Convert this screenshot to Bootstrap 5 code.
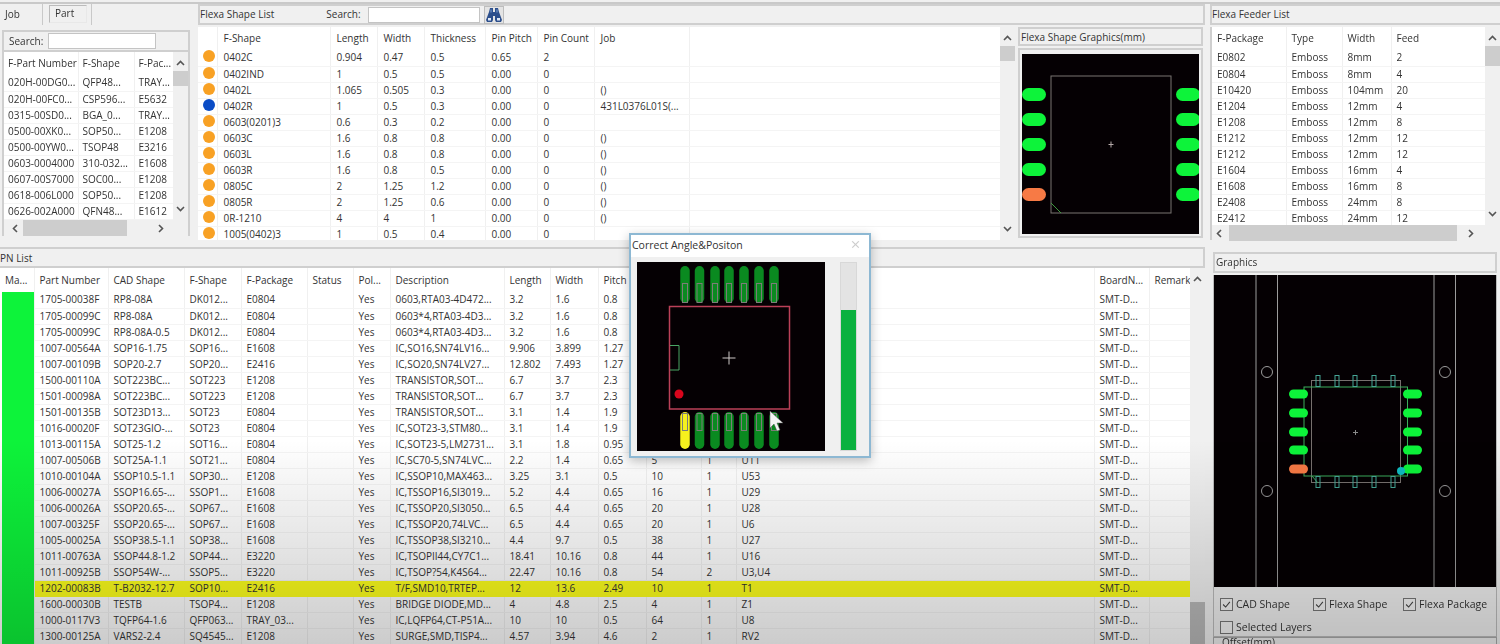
<!DOCTYPE html>
<html lang="en">
<head>
  <meta charset="UTF-8" />
  <meta name="viewport" content="width=device-width, initial-scale=1.0" />
  <title>Flexa Part Library</title>
  <link href="https://cdn.jsdelivr.net/npm/bootstrap@5.3.0/dist/css/bootstrap.min.css" rel="stylesheet" />
  <style>
    html, body { height: 100%; overflow: hidden; }
    body {
      background-color: #f0f0f0;
      color: #333;
      font: 10px/16px "Open Sans", "Liberation Sans", sans-serif;
    }
    .app {
      display: grid;
      grid-template-columns: 197px 1013px 290px;
      grid-template-rows: 245px 397px;
      width: 1500px;
      height: 644px;
      padding-top: 2px;
      border-top: 0;
      position: relative;
      filter: blur(.35px);
    }
    .app::before {
      content: "";
      position: absolute;
      left: 0; right: 0; top: 2px;
      border-top: 2px solid #c9c9c9;
    }
    .app::after {
      content: "";
      position: absolute;
      left: 0; right: 0; top: 440px; bottom: 0;
      background: linear-gradient(rgba(0,0,0,0), rgba(0,0,0,.2));
      pointer-events: none;
    }
    .title-bar {
      height: 21px;
      border: 2px solid #cfcfcf;
      background: #f0f0f0;
      padding-left: 0;
      line-height: 17px;
      flex: none;
    }
    .box { border: 2px solid #cfcfcf; background: #fff; }
    .search-input {
      height: 16px;
      border: 1px solid #c4c4c4;
      background: #fff;
      border-radius: 0;
      padding: 0;
    }
    /* list tables */
    .grid-scroll { flex: 1 1 0; min-width: 0; overflow: hidden; background: #fff; }
    .list-table {
      table-layout: fixed;
      width: auto;
      margin: 0;
      --bs-table-bg: transparent;
      --bs-table-color: #333;
      border-collapse: collapse;
      font-size: 10px;
    }
    .list-table th, .list-table td {
      padding: 0 0 0 6px;
      height: 16px;
      line-height: 15px;
      font-weight: 400;
      white-space: nowrap;
      overflow: hidden;
      border: 0;
      border-right: 1px solid #f0f0f0;
      border-bottom: 1px solid #f4f4f4;
      box-shadow: none;
    }
    .list-table th { height: 23px; border-bottom: 0; vertical-align: middle; }
    .list-table tr.picked td { background: #fdff1c; border-color: #fdff1c; }
    .list-table td.match { background: #0df33a; padding: 0; border-bottom: 0; border-left: 2px solid #fff; }
    .list-table tr.picked td.match { background: #0df33a; border-left-color: #fff; border-right-color: #f0f0f0; }
    .dot { display: block; width: 12px; height: 12px; border-radius: 50%; margin-left: -1px; background: #f8a124; }
    .dot.on { background: #0a4cc6; }
    .vbar { width: 15px; flex: none; background: #f0f0f0; display: flex; flex-direction: column; align-items: center; }
    .vbar .thumb { width: 100%; background: #cdcdcd; }
    .hbar { height: 16px; flex: none; background: #f0f0f0; display: flex; align-items: center; }
    .hbar .thumb { height: 100%; background: #cdcdcd; }
    .chev { width: 9px; height: 6px; flex: none; fill: none; stroke: #555; stroke-width: 1.6; }
    .chev-v { width: 6px; height: 9px; flex: none; fill: none; stroke: #555; stroke-width: 1.6; }

    /* part pane */
    .tabs { height: 28px; flex: none; }
    .tab-job { width: 43px; padding: 2px 0 0 5px; border-right: 1px solid #c9c9c9; height: 21px; margin-top: 2px; }
    .tab-part {
      width: 38px; height: 18px; margin: 3px 0 0 6px; padding-left: 5px; line-height: 15px;
      border: 1px solid #bbb; border-right-color: #e8e8e8; border-bottom-color: #e8e8e8;
    }
    .tab-end { width: 5px; height: 21px; border-right: 1px solid #c9c9c9; margin-top: 2px; }
    .part-search { height: 20px; padding-left: 5px; background: #f0f0f0; border-bottom: 2px solid #cfcfcf; flex: none; }
    .part-pane .search-input { width: 108px; margin-left: 5px; }
    .part-box { width: 188px; height: 206px; margin-left: 2px; }
    .part-pane .list-table th, .part-pane .list-table td { padding-left: 4px; }
    .part-pane .vbar .thumb { height: 15px; margin-top: 5px; }
    .part-pane .hbar .thumb { width: 104px; margin-left: 5px; }
    .part-pane .grid-wrap { height: 168px; flex: none; }

    /* shape pane */
    .shape-pane { padding-left: 1px; padding-right: 0; }
    .shape-title { width: 1007px; padding-right: 0; margin-top: 2px; }
    .shape-title .label-search { margin-left: 52px; }
    .shape-title .search-input { width: 112px; margin-left: 7px; }
    .binoc-btn { width: 20px; height: 18px; margin-left: 4px; border: 1px solid #bdbdbd; background: #e4e4e4; padding: 0; display: block; }
    .binoc { width: 18px; height: 16px; display: block; }
    .shape-body { width: 1007px; height: 213px; margin-top: 2px; background: #f0f0f0; }
    .shape-list { width: 817px; background: #fff; }
    .shape-pane .vbar .thumb { height: 15px; margin-top: 5px; }
    .shape-gfx { width: 185px; margin-left: 3px; }
    .gfx-title { height: 19px; border: 2px solid #cfcfcf; line-height: 16px; padding-left: 1px; }
    .gfx-frame { margin-top: 2px; height: 190px; padding: 4px 2px; border: 2px solid #cfcfcf; }
    .canvas { display: block; background: #050003; }

    /* feeder pane */
    .feeder-title { margin-top: 2px; margin-left: 0; width: 290px; border-right: 0; padding-left: 0; }
    .feeder-body { height: 213px; margin-top: 2px; border-top: 0; }
    .feeder-pane .list-table th, .feeder-pane .list-table td { padding-left: 5px; }
    .feeder-pane .grid-wrap { height: 198px; flex: none; }
    .feeder-pane .vbar .thumb { height: 20px; margin-top: 5px; }
    .feeder-pane .hbar { padding-left: 4px; padding-right: 16px; }
    .feeder-pane .hbar .thumb { width: 228px; margin-left: 7px; margin-right: 11px; }

    /* PN pane */
    .pn-pane { grid-column: 1 / span 2; padding-right: 0; margin-top: 0; }
    .pn-title { width: 1205px; height: 21px; border-left: 0; padding-top: 1px; }
    .pn-body { width: 1205px; background: #fff; flex: 1 1 0; min-height: 0; overflow: hidden; }
    .pn-body .list-table th { height: 24px; }
    .pn-body .list-table th, .pn-body .list-table td { padding-left: 5px; }
    .pn-body .list-table th:first-child { padding-left: 4px; }
    .pn-body .list-table td.match { padding-left: 0; }
    .pn-body .vbar { background: #f0f0f0; }
    .pn-body .vbar .spacer { flex: 1 1 0; }
    .pn-body .vbar .thumb { height: 42px; flex: none; background: #b9b9b9; }

    /* graphics pane */
    .graphics-pane { padding-left: 3px; padding-right: 3px; margin-top: 5px; }
    .graphics-title { height: 21px; border: 2px solid #cfcfcf; line-height: 17px; padding-left: 1px; }
    .graphics-frame { margin-top: 2px; border: 1px solid #bbb; border-top: 0; height: 362px; }
    .layer-opts { padding: 10px 0 0 6px; row-gap: 9px; height: 50px; align-content: flex-start; }
    .layer-opts .form-check { min-height: 0; margin: 0; padding: 0; display: flex; align-items: center; font-size: 10.5px; line-height: 14px; }
    .layer-opts .form-check:nth-child(1) { width: 93px; }
    .layer-opts .form-check:nth-child(2) { width: 90px; }
    .layer-opts .form-check-input {
      float: none;
      width: 13px; height: 13px;
      margin: 0 3px 0 0;
      border: 1px solid #777;
      border-radius: 0;
      background-color: #f4f4f4;
      box-shadow: none;
    }
    .layer-opts .form-check-input:checked {
      background-color: #f4f4f4;
      border-color: #777;
      background-image: url("data:image/svg+xml,%3csvg xmlns='http://www.w3.org/2000/svg' viewBox='0 0 13 13'%3e%3cpath fill='none' stroke='%23444' stroke-width='1.3' d='M2.5 6.5l3 3 5-6'/%3e%3c/svg%3e");
    }
    .offset-group { border: 1px solid #aaa; margin-top: 0; height: 20px; padding-left: 8px; line-height: 8px; }

    /* floating dialog */
    .angle-dialog { position: absolute; left: 629px; top: 233px; width: 242px; height: 225px; z-index: 5; }
    .angle-dialog .modal-content {
      height: 100%;
      background: #f0f0f0;
      border: 2px solid #8db8d3;
      border-radius: 0;
      box-shadow: 0 3px 10px rgba(0,0,0,.25);
    }
    .angle-dialog .modal-header {
      height: 22px; padding: 0 9px 3px 1px; background: #fff; border: 0; border-radius: 0;
      font-size: 10.5px;
    }
    .angle-dialog .btn-close { width: 9px; height: 9px; padding: 0; margin: 0; background-size: 9px; opacity: .2; }
    .angle-dialog .modal-body { padding: 5px 0 0 6px; gap: 15px; }
    .angle-dialog .progress {
      width: 17px; height: 189px; border-radius: 0;
      background: #e3e3e3; border: 1px solid #d8d8d8;
    }
    .angle-dialog .progress-bar { background: #0bb13f; width: 100%; }
  </style>
</head>
<body>
  <div class="app">
    <!-- Part list -->
    <section class="part-pane d-flex flex-column">
      <div class="tabs d-flex">
        <div class="tab-job">Job</div>
        <div class="tab-part">Part</div>
        <div class="tab-end"></div>
      </div>
      <div class="part-box box d-flex flex-column">
        <div class="part-search d-flex align-items-center">
          <span>Search:</span>
          <input class="search-input" type="text" aria-label="Search parts" />
        </div>
        <div class="grid-wrap d-flex">
          <div class="grid-scroll" id="partGrid"></div>
          <div class="vbar pt-2">
            <svg class="chev" viewBox="0 0 9 6"><path d="M1 5l3.5-3.5L8 5" /></svg>
            <div class="thumb"></div>
            <div class="flex-grow-1"></div>
            <svg class="chev mb-2" viewBox="0 0 9 6"><path d="M1 1l3.5 3.5L8 1" /></svg>
          </div>
        </div>
        <div class="hbar ps-1">
          <svg class="chev-v ms-1" viewBox="0 0 6 9"><path d="M5 1L1.5 4.500 5 8" /></svg>
          <div class="thumb"></div>
          <div class="flex-grow-1"></div>
          <svg class="chev-v me-4" viewBox="0 0 6 9"><path d="M1 1l3.500 3.500L1 8" /></svg>
        </div>
      </div>
    </section>

    <!-- Flexa shape list -->
    <section class="shape-pane d-flex flex-column">
      <div class="shape-title title-bar d-flex align-items-center">
        <span>Flexa Shape List</span>
        <span class="label-search">Search:</span>
        <input class="search-input" type="text" aria-label="Search shapes" />
        <button type="button" class="binoc-btn" aria-label="Find">
          <svg class="binoc" viewBox="0 0 18 16">
            <path d="M5 1h3v4h2V1h3l1 4 3 8-1 2h-5l-1-2V9H8v4l-1 2H2l-1-2 3-8z" fill="#2c4f8c" />
            <path d="M3 11h3v2.500H3zM12 11h3v2.500h-3z" fill="#dfe8f5" />
            <path d="M5.500 2.500h1v3h-1zM11.500 2.500h1v3h-1z" fill="#7fa3d6" />
          </svg>
        </button>
      </div>
      <div class="shape-body d-flex">
        <div class="shape-list d-flex">
          <div class="grid-scroll" id="shapeGrid"></div>
          <div class="vbar pt-2">
            <svg class="chev" viewBox="0 0 9 6"><path d="M1 5l3.500-3.500L8 5" /></svg>
            <div class="thumb"></div>
            <div class="flex-grow-1"></div>
            <svg class="chev mb-2" viewBox="0 0 9 6"><path d="M1 1l3.500 3.500L8 1" /></svg>
          </div>
        </div>
        <div class="shape-gfx">
          <div class="gfx-title">Flexa Shape Graphics(mm)</div>
          <div class="gfx-frame">
            <svg class="canvas" width="177" height="180" viewBox="1022 54 177 180">
              <g fill="#0df33a">
                <rect x="1022" y="88" width="24" height="13" rx="6.500" />
                <rect x="1022" y="113" width="24" height="13" rx="6.500" />
                <rect x="1022" y="138" width="24" height="13" rx="6.500" />
                <rect x="1022" y="163" width="24" height="13" rx="6.500" />
                <rect x="1176" y="88" width="24" height="13" rx="6.500" />
                <rect x="1176" y="113" width="24" height="13" rx="6.500" />
                <rect x="1176" y="138" width="24" height="13" rx="6.500" />
                <rect x="1176" y="163" width="24" height="13" rx="6.500" />
                <rect x="1176" y="188" width="24" height="13" rx="6.500" />
              </g>
              <rect x="1022" y="188" width="24" height="13" rx="6.500" fill="#f77a45" />
              <rect x="1051" y="76" width="120" height="137" fill="none" stroke="#7a7572" />
              <path d="M1051 203l10 10" stroke="#3f9a3f" fill="none" />
              <path d="M1111 141.500v6M1108.500 144.500h5" stroke="#b5a9a9" fill="none" />
            </svg>
          </div>
        </div>
      </div>
    </section>

    <!-- Flexa feeder list -->
    <section class="feeder-pane d-flex flex-column">
      <div class="feeder-title title-bar">Flexa Feeder List</div>
      <div class="feeder-body box d-flex flex-column border-end-0">
        <div class="grid-wrap d-flex">
          <div class="grid-scroll" id="feederGrid"></div>
          <div class="vbar pt-2">
            <svg class="chev" viewBox="0 0 9 6"><path d="M1 5l3.500-3.500L8 5" /></svg>
            <div class="thumb"></div>
            <div class="flex-grow-1"></div>
            <svg class="chev mb-2" viewBox="0 0 9 6"><path d="M1 1l3.500 3.500L8 1" /></svg>
          </div>
        </div>
        <div class="hbar">
          <svg class="chev-v" viewBox="0 0 6 9"><path d="M5 1L1.500 4.500 5 8" /></svg>
          <div class="thumb"></div>
          <svg class="chev-v" viewBox="0 0 6 9"><path d="M1 1l3.500 3.500L1 8" /></svg>
        </div>
      </div>
    </section>

    <!-- PN list -->
    <section class="pn-pane d-flex flex-column">
      <div class="pn-title title-bar">PN List</div>
      <div class="pn-body d-flex">
        <div class="grid-scroll" id="pnGrid"></div>
        <div class="vbar pt-2">
          <svg class="chev" viewBox="0 0 9 6"><path d="M1 5l3.500-3.500L8 5" /></svg>
          <div class="spacer"></div>
          <div class="thumb"></div>
        </div>
      </div>
    </section>

    <!-- Board graphics -->
    <section class="graphics-pane d-flex flex-column">
      <div class="graphics-title">Graphics</div>
      <div class="graphics-frame">
        <svg class="canvas" width="282" height="312" viewBox="1214 275 282 312">
          <g stroke="#9c9c9c" fill="none">
            <path d="M1256 275v312M1277.500 275v312M1434 275v312M1455.500 275v312" />
            <circle cx="1267" cy="372" r="5.500" />
            <circle cx="1267" cy="491" r="5.500" />
            <circle cx="1445" cy="372" r="5.500" />
            <circle cx="1445" cy="491" r="5.500" />
            <rect x="1311.500" y="380.500" width="89" height="102" stroke="#77706e" />
          </g>
          <rect x="1304" y="387" width="103.500" height="89" fill="none" stroke="#3cae5c" />
          <path d="M1312 476l6 7" fill="none" stroke="#3cae5c" />
          <g fill="none" stroke="#46a596" id="leadPins"></g>
          <g fill="#0df33a" id="boardPads"></g>
          <rect x="1289" y="464.500" width="19" height="9" rx="4.500" fill="#f77a45" />
          <circle cx="1401" cy="471" r="4" fill="#10bcc0" />
          <path d="M1355.500 430v5M1353 432.500h5" stroke="#8a8a8a" fill="none" />
        </svg>
        <div class="layer-opts d-flex flex-wrap">
          <div class="form-check"><input class="form-check-input" type="checkbox" id="layerCad" checked /><label for="layerCad">CAD Shape</label></div>
          <div class="form-check"><input class="form-check-input" type="checkbox" id="layerShape" checked /><label for="layerShape">Flexa Shape</label></div>
          <div class="form-check"><input class="form-check-input" type="checkbox" id="layerPack" checked /><label for="layerPack">Flexa Package</label></div>
          <div class="form-check w-100"><input class="form-check-input" type="checkbox" id="layerSel" /><label for="layerSel">Selected Layers</label></div>
        </div>
      </div>
      <div class="offset-group">Offset(mm)</div>
    </section>

    <!-- Correct angle dialog -->
    <div class="angle-dialog">
      <div class="modal-content">
        <div class="modal-header">
          <span class="modal-title">Correct Angle&amp;Positon</span>
          <button type="button" class="btn-close" aria-label="Close"></button>
        </div>
        <div class="modal-body d-flex">
          <svg class="canvas" width="188" height="189" viewBox="637 262 188 189">
            <g id="chipPins"></g>
            <rect x="669.500" y="306.500" width="120" height="102.500" fill="none" stroke="#bb4058" stroke-width="1.500" />
            <path d="M670 345.500h9v24.500h-9" fill="none" stroke="#4aa564" />
            <circle cx="679" cy="394" r="4.500" fill="#d8051c" />
            <path d="M729 351.500v13M722.500 358h13" stroke="#cfc8c8" fill="none" />
            <path d="M770 411v17l4-4 3 7 3-1-3-7h6z" fill="#f4f4f4" stroke="#555" stroke-width=".5" />
          </svg>
          <div class="progress d-flex flex-column justify-content-end">
            <div class="progress-bar" id="angleBar"></div>
          </div>
        </div>
      </div>
    </div>
  </div>

  <script>
    const partCols = [["F-Part Number", 74], ["F-Shape", 56], ["F-Pac...", 41]];
    const partRows = [
      ["020H-00DG0...", "QFP48...", "TRAY..."],
      ["020H-00FC0...", "CSP596...", "E5632"],
      ["0315-00SD0...", "BGA_0...", "TRAY..."],
      ["0500-00XK0...", "SOP50...", "E1208"],
      ["0500-00YW0...", "TSOP48", "E3216"],
      ["0603-0004000", "310-032...", "E1608"],
      ["0607-00S7000", "SOC00...", "E1208"],
      ["0618-006L000", "SOP50...", "E1208"],
      ["0626-002A000", "QFN48...", "E1612"]
    ];

    const shapeCols = [["", 19], ["F-Shape", 113], ["Length", 47], ["Width", 47], ["Thickness", 61], ["Pin Pitch", 52], ["Pin Count", 57], ["Job", 95], ["", 311]];
    const shapeRows = [
      ["0402C", "0.904", "0.47", "0.5", "0.65", "2", ""],
      ["0402IND", "1", "0.5", "0.5", "0.00", "0", ""],
      ["0402L", "1.065", "0.505", "0.3", "0.00", "0", "()"],
      ["0402R", "1", "0.5", "0.3", "0.00", "0", "431L0376L01S(..."],
      ["0603(0201)3", "0.6", "0.3", "0.2", "0.00", "0", ""],
      ["0603C", "1.6", "0.8", "0.8", "0.00", "0", "()"],
      ["0603L", "1.6", "0.8", "0.8", "0.00", "0", "()"],
      ["0603R", "1.6", "0.8", "0.5", "0.00", "0", "()"],
      ["0805C", "2", "1.25", "1.2", "0.00", "0", "()"],
      ["0805R", "2", "1.25", "0.6", "0.00", "0", "()"],
      ["0R-1210", "4", "4", "1", "0.00", "0", "()"],
      ["1005(0402)3", "1", "0.5", "0.4", "0.00", "0", ""]
    ];

    const feederCols = [["F-Package", 74], ["Type", 56], ["Width", 49], ["Feed", 95]];
    const feederRows = [
      ["E0802", "Emboss", "8mm", "2"],
      ["E0804", "Emboss", "8mm", "4"],
      ["E10420", "Emboss", "104mm", "20"],
      ["E1204", "Emboss", "12mm", "4"],
      ["E1208", "Emboss", "12mm", "8"],
      ["E1212", "Emboss", "12mm", "12"],
      ["E1212", "Emboss", "12mm", "12"],
      ["E1604", "Emboss", "16mm", "4"],
      ["E1608", "Emboss", "16mm", "8"],
      ["E2408", "Emboss", "24mm", "8"],
      ["E2412", "Emboss", "24mm", "12"]
    ];

    const pnCols = [["Ma...", 33], ["Part Number", 74], ["CAD Shape", 76], ["F-Shape", 57], ["F-Package", 66], ["Status", 46], ["Pol...", 37], ["Description", 114], ["Length", 46], ["Width", 48], ["Pitch", 48], ["", 55], ["", 35], ["", 358], ["BoardN...", 55], ["Remark", 42]];
    const pnRows = [
      ["1705-00038F", "RP8-08A", "DK012...", "E0804", "0603,RTA03-4D472...", "3.2", "1.6", "0.8", "", "", ""],
      ["1705-00099C", "RP8-08A", "DK012...", "E0804", "0603*4,RTA03-4D3...", "3.2", "1.6", "0.8", "", "", ""],
      ["1705-00099C", "RP8-08A-0.5", "DK012...", "E0804", "0603*4,RTA03-4D3...", "3.2", "1.6", "0.8", "", "", ""],
      ["1007-00564A", "SOP16-1.75", "SOP16...", "E1608", "IC,SO16,SN74LV16...", "9.906", "3.899", "1.27", "", "", ""],
      ["1007-00109B", "SOP20-2.7", "SOP20...", "E2416", "IC,SO20,SN74LV27...", "12.802", "7.493", "1.27", "", "", ""],
      ["1500-00110A", "SOT223BC...", "SOT223", "E1208", "TRANSISTOR,SOT...", "6.7", "3.7", "2.3", "", "", ""],
      ["1501-00098A", "SOT223BC...", "SOT223", "E1208", "TRANSISTOR,SOT...", "6.7", "3.7", "2.3", "", "", ""],
      ["1501-00135B", "SOT23D13...", "SOT23", "E0804", "TRANSISTOR,SOT...", "3.1", "1.4", "1.9", "", "", ""],
      ["1016-00020F", "SOT23GIO-...", "SOT23", "E0804", "IC,SOT23-3,STM80...", "3.1", "1.4", "1.9", "", "", ""],
      ["1013-00115A", "SOT25-1.2", "SOT16...", "E0804", "IC,SOT23-5,LM2731...", "3.1", "1.8", "0.95", "", "", ""],
      ["1007-00506B", "SOT25A-1.1", "SOT21...", "E0804", "IC,SC70-5,SN74LVC...", "2.2", "1.4", "0.65", "5", "1", "U11"],
      ["1010-00104A", "SSOP10.5-1.1", "SOP30...", "E1208", "IC,SSOP10,MAX463...", "3.25", "3.1", "0.5", "10", "1", "U53"],
      ["1006-00027A", "SSOP16.65-...", "SSOP1...", "E1608", "IC,TSSOP16,SI3019...", "5.2", "4.4", "0.65", "16", "1", "U29"],
      ["1006-00026A", "SSOP20.65-...", "SOP67...", "E1608", "IC,TSSOP20,SI3050...", "6.5", "4.4", "0.65", "20", "1", "U28"],
      ["1007-00325F", "SSOP20.65-...", "SOP67...", "E1608", "IC,TSSOP20,74LVC...", "6.5", "4.4", "0.65", "20", "1", "U6"],
      ["1005-00025A", "SSOP38.5-1.1", "SOP38...", "E1608", "IC,TSSOP38,SI3210...", "4.4", "9.7", "0.5", "38", "1", "U27"],
      ["1011-00763A", "SSOP44.8-1.2", "SOP44...", "E3220", "IC,TSOPII44,CY7C1...", "18.41", "10.16", "0.8", "44", "1", "U16"],
      ["1011-00925B", "SSOP54W-...", "SSOP5...", "E3220", "IC,TSOP?54,K4S64...", "22.47", "10.16", "0.8", "54", "2", "U3,U4"],
      ["1202-00083B", "T-B2032-12.7", "SOP10...", "E2416", "T/F,SMD10,TRTEP...", "12", "13.6", "2.49", "10", "1", "T1"],
      ["1600-00030B", "TESTB", "TSOP4...", "E1208", "BRIDGE DIODE,MD...", "4", "4.8", "2.5", "4", "1", "Z1"],
      ["1000-0117V3", "TQFP64-1.6", "QFP063...", "TRAY_03...", "IC,LQFP64,CT-P51A...", "10", "10", "0.5", "64", "1", "U8"],
      ["1300-00125A", "VARS2-2.4", "SQ4545...", "E1208", "SURGE,SMD,TISP4...", "4.57", "3.94", "4.6", "2", "1", "RV2"]
    ];

    // builds one table; rows are already full cell html
    function renderTable(id, cols, rowHtml) {
      const total = cols.reduce((sum, c) => sum + c[1], 0);
      const table = document.createElement("table");
      table.className = "table list-table";
      table.style.width = total + "px";
      const colgroup = cols.map(c => `<col style="width:${c[1]}px">`).join("");
      const head = cols.map(c => `<th>${c[0]}</th>`).join("");
      table.innerHTML = `<colgroup>${colgroup}</colgroup><thead><tr>${head}</tr></thead><tbody>${rowHtml.join("")}</tbody>`;
      document.getElementById(id).appendChild(table);
    }

    const cells = row => row.map(v => `<td>${v}</td>`).join("");

    renderTable("partGrid", partCols, partRows.map(r => `<tr>${cells(r)}</tr>`));
    renderTable("feederGrid", feederCols, feederRows.map(r => `<tr>${cells(r)}</tr>`));
    renderTable("shapeGrid", shapeCols, shapeRows.map(r => {
      const dot = r[0] === "0402R" ? "dot on" : "dot";
      return `<tr><td><span class="${dot}"></span></td>${cells(r)}<td></td></tr>`;
    }));
    renderTable("pnGrid", pnCols, pnRows.map(r => {
      const picked = r[0] === "1202-00083B" ? "picked" : "";
      const row = [...r.slice(0, 4), "", "Yes", ...r.slice(4), "SMT-D...", ""];
      return `<tr class="${picked}"><td class="match"></td>${cells(row)}</tr>`;
    }));

    // pins and pads of the two footprints
    let pins = "";
    [1318, 1337, 1355, 1374, 1393].forEach(x => {
      pins += `<rect x="${x - 2}" y="375.500" width="4" height="11" /><rect x="${x - 2}" y="476.500" width="4" height="11" />`;
    });
    document.getElementById("leadPins").innerHTML = pins;

    let pads = "";
    [394, 413, 432, 450, 469].forEach((y, i) => {
      if (i < 4) pads += `<rect x="1289" y="${y - 4.5}" width="19" height="9" rx="4.500" />`;
      pads += `<rect x="1403" y="${y - 4.5}" width="19" height="9" rx="4.500" />`;
    });
    document.getElementById("boardPads").innerHTML = pads;

    let chip = "";
    [685, 699.5, 715, 729, 744, 759, 774].forEach((x, i) => {
      const bottomFill = i === 0 ? "#f6f01e" : "#0a8a20";
      chip += `<rect x="${x - 4.75}" y="266" width="9.500" height="37" rx="4.750" fill="#0a8a20" />`;
      chip += `<rect x="${x - 2.5}" y="283.500" width="5" height="19" fill="none" stroke="#7c7c78" />`;
      chip += `<rect x="${x - 4.75}" y="412" width="9.500" height="37" rx="4.750" fill="${bottomFill}" />`;
      chip += `<rect x="${x - 2.5}" y="413.500" width="5" height="17" fill="none" stroke="#7c7c78" />`;
    });
    document.getElementById("chipPins").innerHTML = chip;

    // correction progress
    document.getElementById("angleBar").style.height = "75%";
  </script>
  <script src="https://cdn.jsdelivr.net/npm/bootstrap@5.3.0/dist/js/bootstrap.bundle.min.js"></script>
</body>
</html>
